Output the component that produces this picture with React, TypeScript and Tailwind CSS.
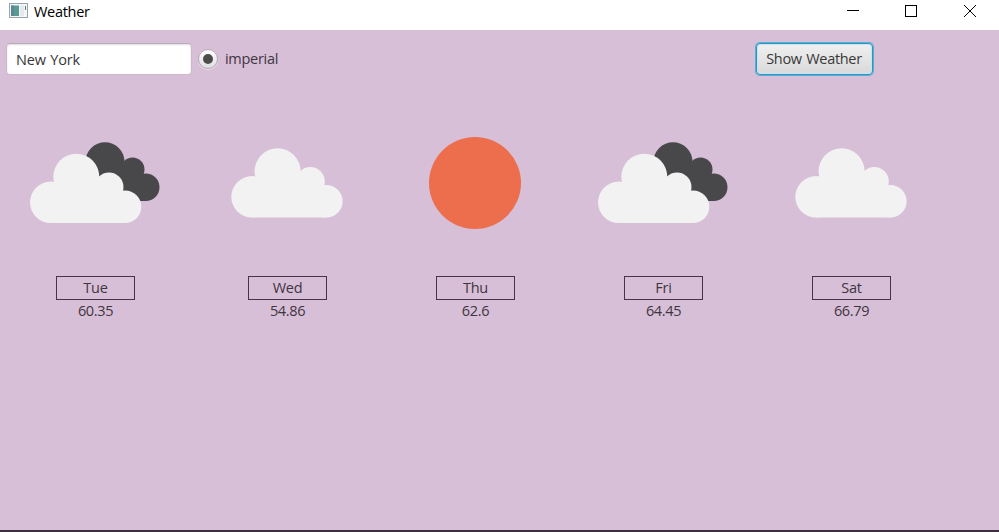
import React from "react";

type Sky = "broken" | "cloudy" | "clear";

interface Day {
  name: string;
  temp: string;
  sky: Sky;
}

const days: Day[] = [
  { name: "Tue", temp: "60.35", sky: "broken" },
  { name: "Wed", temp: "54.86", sky: "cloudy" },
  { name: "Thu", temp: "62.6", sky: "clear" },
  { name: "Fri", temp: "64.45", sky: "broken" },
  { name: "Sat", temp: "66.79", sky: "cloudy" },
];

function Cloud() {
  return (
    <g>
      <circle cx="20.7" cy="72.3" r="20.7" />
      <circle cx="46.3" cy="46.7" r="23" />
      <circle cx="79" cy="57" r="14.5" />
      <circle cx="95" cy="76.7" r="16.3" />
      <path d="M20.7 93V62L46 46L68 48L79 57L92 66L95 76V93Z" />
    </g>
  );
}

function SkyIcon({ sky }: { sky: Sky }) {
  return (
    <svg width="130" height="120" viewBox="0 0 130 120" className="mr-[2px] block">
      {sky === "broken" && (
        <>
          <g fill="#48484a">
            <circle cx="75" cy="31.7" r="19.5" />
            <circle cx="102.5" cy="39.5" r="12" />
            <circle cx="115.8" cy="57.3" r="13.7" />
            <path d="M75 30L92 36L102 40L112 46L116 57V71H75Z" />
          </g>
          <g fill="#f2f2f2">
            <Cloud />
          </g>
        </>
      )}
      {sky === "cloudy" && (
        <g fill="#f2f2f2" transform="translate(9.3 -5.5)">
          <Cloud />
        </g>
      )}
      {sky === "clear" && <circle cx="65" cy="53" r="46" fill="#ec6e4c" />}
    </svg>
  );
}

function TitleBar() {
  return (
    <header className="flex h-[30px] items-start bg-white pl-[9px] text-black">
      <svg width="19" height="16" viewBox="0 0 19 16" className="mt-[3px]">
        <rect x="0.5" y="0.5" width="18" height="14" fill="#f4f7f8" stroke="#9aa4a8" />
        <rect x="2" y="2.5" width="8" height="10.5" fill="#5a9a90" />
        <rect x="2" y="2.5" width="3" height="10.5" fill="#5b8798" />
        <rect x="11" y="2.5" width="4" height="10.5" fill="#e3e9ee" />
        <rect x="16" y="3" width="1" height="4" fill="#62777d" />
      </svg>
      <h1 className="ml-[6px] mt-[2px] text-[14.5px] leading-5 tracking-[-0.3px]">Weather</h1>
      <svg width="130" height="14" viewBox="0 0 130 14" className="ml-auto mr-[22px] mt-[4px]" fill="none" stroke="#000">
        <path d="M0 6.5H12" />
        <rect x="58.5" y="1.5" width="11" height="11" />
        <path d="M117 1L129 13M129 1L117 13" />
      </svg>
    </header>
  );
}

export default function App() {
  return (
    <div className="flex h-[532px] w-[999px] flex-col overflow-hidden border-b-2 border-[#3b2f3e] bg-[#d8bfd8] font-['Open_Sans','Noto_Sans',sans-serif] text-[14.5px] text-[#3f353f]">
      <TitleBar />
      <div className="flex h-[60px] items-start pl-[6px] pt-[13px]">
        <input
          defaultValue="New York"
          className="h-[32px] w-[186px] rounded-[4px] border border-[#cbb9cb] border-t-[#b8aab8] bg-white px-[9px] tracking-[-0.2px] text-[#383838] shadow-[inset_0_1px_2px_#ddd] outline-none [word-spacing:1px]"
        />
        <label className="ml-[6px] flex h-[32px] items-center">
          <span className="flex size-[20px] items-center justify-center rounded-full border border-[#b9a9b9] bg-linear-to-b from-white to-[#dedede] shadow-[0_1px_0_#eadfea]">
            <span className="size-[10px] rounded-full bg-[#4c4c4c]" />
          </span>
          <span className="ml-[7px] w-[55px] tracking-[-0.3px]">imperial</span>
        </label>
        <button className="ml-[476px] h-[32px] w-[117px] whitespace-nowrap rounded-[4px] border border-[#2b96c2] bg-linear-to-b from-[#f0f0f0] to-[#d9d9d9] pr-[1px] tracking-[-0.3px] text-[#383838] shadow-[0_0_0_1px_#5aaed2,inset_0_0_0_1px_#c4e5f2] [word-spacing:1px]">
          Show Weather
        </button>
      </div>
      <main className="flex gap-px pl-[2px] pt-[40px]">
        {days.map((day) => (
          <section key={day.name} className="flex w-[187px] flex-col items-center first:mr-[4px]">
            <SkyIcon sky={day.sky} />
            <div className="mt-[26px] flex h-[24px] w-[79px] items-center justify-center border border-[#48344a] tracking-[-0.25px]">
              {day.name}
            </div>
            <div className="leading-[22px] tracking-[-0.35px]">{day.temp}</div>
          </section>
        ))}
      </main>
    </div>
  );
}
